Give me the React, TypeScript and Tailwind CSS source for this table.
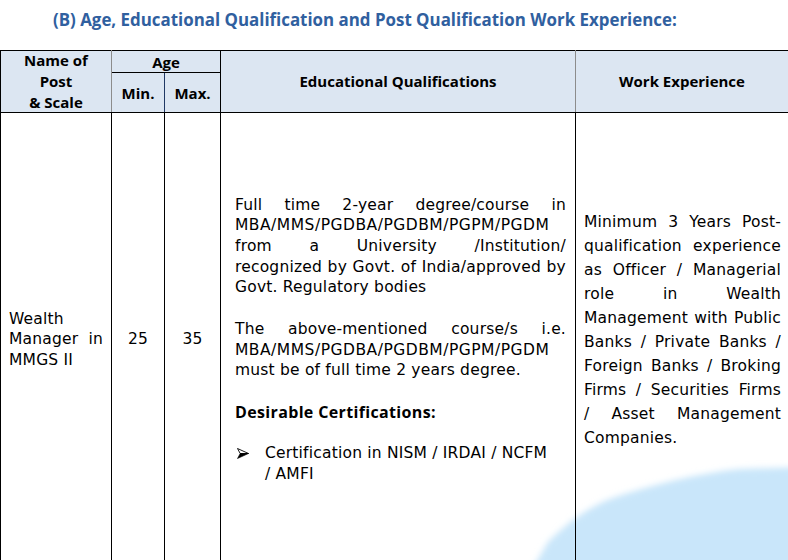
import React from "react";

const J = "whitespace-nowrap text-justify [text-align-last:justify]";

function Line({
  children,
  j = false,
  className = "",
}: {
  children: React.ReactNode;
  j?: boolean;
  className?: string;
}) {
  return <div className={(j ? J : "whitespace-nowrap text-left") + " " + className}>{children}</div>;
}

const BODY = { fontFamily: '"DejaVu Sans", "Liberation Sans", sans-serif' };
const BOLD = { fontFamily: '"Open Sans", "Noto Sans", sans-serif' };

function ArrowBullet() {
  return (
    <svg width="12" height="11" viewBox="0 0 12 11" className="mt-[5px]">
      <path d="M0.5 0.5 L11.5 5.5 L3.2 5.5 Z" fill="#ffffff" stroke="#000" strokeWidth="0.9" strokeLinejoin="round" />
      <path d="M3.2 5.5 L11.5 5.5 L0.5 10.5 Z" fill="#000" stroke="#000" strokeWidth="0.6" strokeLinejoin="round" />
    </svg>
  );
}

export default function App() {
  return (
    <div
      className="relative w-[788px] h-[560px] overflow-hidden bg-white text-black"
      style={BOLD}
    >
      {/* watermark */}
      <svg
        className="absolute left-0 top-0 z-0"
        width="788"
        height="560"
        viewBox="0 0 788 560"
      >
        <defs>
          <filter id="wmblur" x="-20%" y="-20%" width="140%" height="140%">
            <feGaussianBlur stdDeviation="3" />
          </filter>
        </defs>
        <path
          d="M 810 467 L 740 469 C 700 473, 650 485, 610 499 C 590 507, 570 520, 548 542 L 526 580 L 810 580 Z"
          fill="#c9e6fa"
          filter="url(#wmblur)"
        />
      </svg>

      <div className="relative z-10">
        <div className="h-[50px] pl-[53px] pt-[8px] text-[16.9px] leading-[24px] font-bold text-[#30609f]">
          (B) Age, Educational Qualification and Post Qualification Work Experience:
        </div>

        <table className="table-fixed border-collapse w-[788px]">
          <colgroup>
            <col className="w-[111px]" />
            <col className="w-[53px]" />
            <col className="w-[56px]" />
            <col className="w-[355px]" />
            <col className="w-[213px]" />
          </colgroup>
          <thead>
            <tr className="h-[22px] bg-[#dce6f2] text-[15px] font-bold">
              <th
                rowSpan={2}
                className="border border-black border-r-[#8c8c8c] align-middle text-center font-bold leading-[21px] p-0"
              >
                <div className="-my-[1px]">
                  <div>Name of</div>
                  <div>Post</div>
                  <div>&amp; Scale</div>
                </div>
              </th>
              <th colSpan={2} className="border border-black text-center font-bold leading-[20px] p-0">
                Age
              </th>
              <th
                rowSpan={2}
                className="border border-black border-r-[#8c8c8c] text-center font-bold p-0"
              >
                Educational Qualifications
              </th>
              <th rowSpan={2} className="border border-black text-center font-bold p-0">
                Work Experience
              </th>
            </tr>
            <tr className="h-[40px] bg-[#dce6f2] text-[15px] font-bold">
              <th className="border border-black border-r-[#1f3864] text-center font-bold p-0 pt-[2px]">Min.</th>
              <th className="border border-black text-center font-bold p-0 pt-[2px]">Max.</th>
            </tr>
          </thead>
          <tbody className="text-[15.5px] tracking-[0.2px]" style={BODY}>
            <tr className="h-[454px]">
              <td className="border border-black align-middle pl-[8px] pr-[8px] leading-[20.5px]">
                <Line>Wealth</Line>
                <Line j>Manager in</Line>
                <Line>MMGS II</Line>
              </td>
              <td className="border border-black align-middle text-center leading-[20.5px]">25</td>
              <td className="border border-black align-middle text-center leading-[20.5px]">35</td>
              <td className="border border-black align-middle pl-[14px] pr-[9px] leading-[20.7px]">
                <div>
                  <Line j>Full time 2-year degree/course in</Line>
                  <Line className="tracking-[0.5px]">MBA/MMS/PGDBA/PGDBM/PGPM/PGDM</Line>
                  <Line j>from a University /Institution/</Line>
                  <Line j>recognized by Govt. of India/approved by</Line>
                  <Line>Govt. Regulatory bodies</Line>
                </div>
                <div className="mt-[20.7px]">
                  <Line j>The above-mentioned course/s i.e.</Line>
                  <Line className="tracking-[0.5px]">MBA/MMS/PGDBA/PGDBM/PGPM/PGDM</Line>
                  <Line>must be of full time 2 years degree.</Line>
                </div>
                <div className="mt-[20.7px] font-bold text-[16px] tracking-[0.35px]" style={BOLD}>
                  Desirable Certifications:
                </div>
                <div className="mt-[20.7px] flex">
                  <div className="w-[30px] shrink-0 pl-[2px]">
                    <ArrowBullet />
                  </div>
                  <div>
                    <Line>Certification in NISM / IRDAI / NCFM</Line>
                    <Line>/ AMFI</Line>
                  </div>
                </div>
              </td>
              <td className="border border-black align-middle pl-[8px] pr-[7px] pb-[19px] leading-[24px]">
                <Line j>Minimum 3 Years Post-</Line>
                <Line j>qualification experience</Line>
                <Line j>as Officer / Managerial</Line>
                <Line j>role in Wealth</Line>
                <Line j>Management with Public</Line>
                <Line j>Banks / Private Banks /</Line>
                <Line j>Foreign Banks / Broking</Line>
                <Line j>Firms / Securities Firms</Line>
                <Line j>/ Asset Management</Line>
                <Line>Companies.</Line>
              </td>
            </tr>
          </tbody>
        </table>
      </div>
    </div>
  );
}
